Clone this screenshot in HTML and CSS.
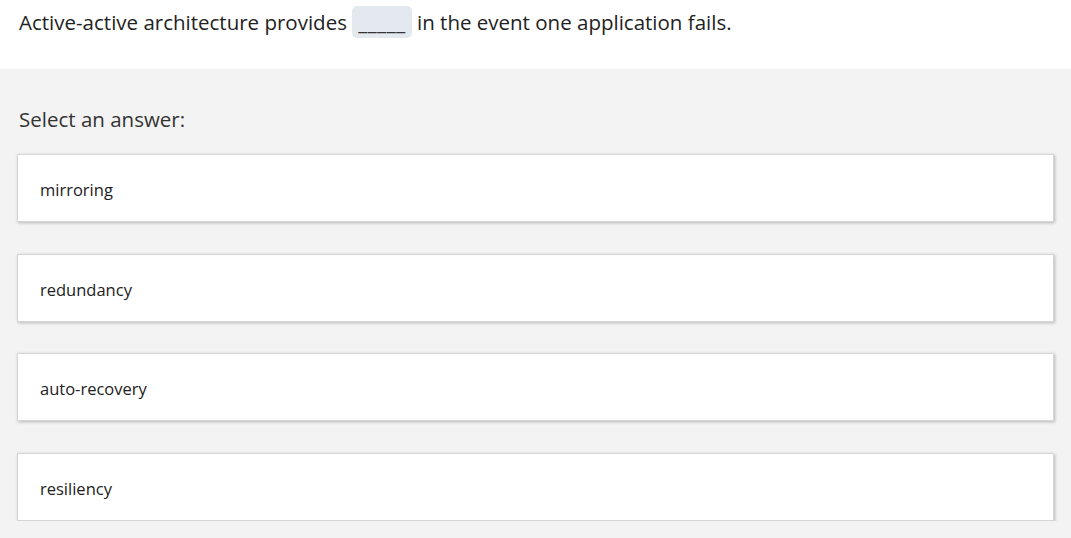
FILE: index.html
```html
<!DOCTYPE html>
<html>
<head>
<meta charset="utf-8">
<link rel="stylesheet" href="styles.css">
</head>
<body>
<div class="question">
  <p class="prompt">Active-active architecture provides <span class="blank">_____</span> in the event one application fails.</p>
</div>
<div class="answers">
  <p class="label">Select an answer:</p>
  <div class="options">
    <div class="option">mirroring</div>
    <div class="option">redundancy</div>
    <div class="option">auto-recovery</div>
    <div class="option">resiliency</div>
  </div>
</div>
</body>
</html>
```
FILE: styles.css
```css
html, body {
  margin: 0;
  padding: 0;
  background: #f3f3f3;
  font-family: "Open Sans", "Noto Sans", sans-serif;
  color: #222;
}
.question {
  background: #ffffff;
  height: 69px;
  padding: 0 19px;
  box-sizing: border-box;
}
.prompt {
  margin: 0;
  padding-top: 6px;
  font-size: 20.5px;
  line-height: 32px;
}
.blank {
  display: inline-block;
  background: #e3e9ef;
  border-radius: 5px;
  padding: 0 6px;
  height: 32px;
  line-height: 32px;
  color: #333;
  letter-spacing: 0.5px;
  vertical-align: top;
}
.answers {
  padding: 36px 17px 0 17px;
}
.label {
  margin: 0 0 0 2px;
  font-size: 20.5px;
  line-height: 28px;
  color: #333;
}
.options {
  margin-top: 21px;
  display: flex;
  flex-direction: column;
  gap: 31.7px;
}
.option {
  background: #fff;
  border: 1px solid #d6d6d6;
  box-shadow: 1px 1px 3px rgba(0,0,0,0.25);
  height: 68px;
  box-sizing: border-box;
  padding-left: 22px;
  padding-top: 3px;
  display: flex;
  align-items: center;
  font-size: 16.5px;
  color: #222;
}
```
